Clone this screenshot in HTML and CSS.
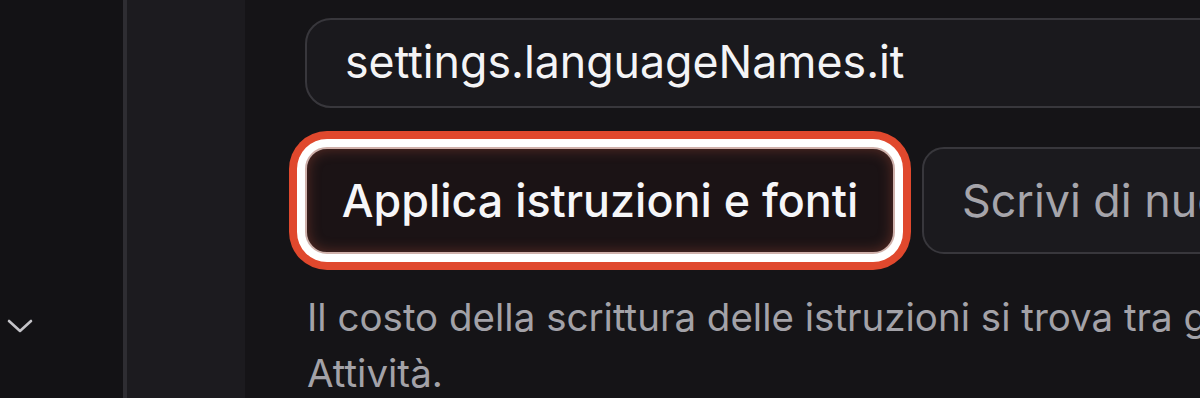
FILE: index.html
```html
<!DOCTYPE html>
<html lang="it">
<head>
<meta charset="utf-8">
<link rel="stylesheet" href="styles.css">
</head>
<body>
<div class="app">
  <aside class="rail">
    <svg class="chev" width="26" height="16" viewBox="0 0 26 16"><path d="M2 3 L13 13 L24 3" fill="none" stroke="#c4c3c8" stroke-width="2.6" stroke-linecap="round" stroke-linejoin="round"/></svg>
  </aside>
  <aside class="panel"></aside>
  <main class="main">
    <div class="field">settings.languageNames.it</div>
    <div class="actions">
      <button class="btn btn-primary">Applica istruzioni e fonti</button>
      <button class="btn btn-secondary">Scrivi di nuovo le istruzioni</button>
    </div>
    <p class="note">Il costo della scrittura delle istruzioni si trova tra gli addebiti nella pagina Attività.</p>
  </main>
</div>
</body>
</html>
```

FILE: styles.css
```css
html, body {
  margin: 0;
  padding: 0;
  background: #151417;
  overflow: hidden;
}
.app {
  display: flex;
  width: 1200px;
  height: 398px;
  overflow: hidden;
}
.rail {
  flex: 0 0 127px;
  background: #131215;
  border-right: 4px solid #2e2d32;
  display: flex;
  flex-direction: column;
  padding-top: 318px;
  padding-left: 7px;
  box-sizing: border-box;
}
.chev { display: block; }
.panel {
  flex: 0 0 118px;
  background: #1c1b1f;
}
.main {
  flex: 1 1 auto;
  padding: 18px 0 0 60px;
  min-width: 0;
  overflow: hidden;
}
.field {
  box-sizing: border-box;
  width: 1000px;
  height: 90px;
  border: 2px solid #38373c;
  border-radius: 26px;
  background: #1a191d;
  color: #f4f4f6;
  font-family: Inter, "Noto Sans", sans-serif;
  font-size: 44.7px;
  line-height: 84px;
  padding-left: 38px;
  white-space: nowrap;
}
.actions {
  display: flex;
  gap: 27px;
  margin-top: 39px;
  white-space: nowrap;
}
.btn {
  box-sizing: border-box;
  height: 107px;
  border-radius: 22px;
  font-family: Inter, "Noto Sans", sans-serif;
  font-size: 44.8px;
  font-weight: 500;
  padding: 0;
  flex: 0 0 auto;
}
.btn-primary {
  width: 590px;
  background: #1b1315;
  color: #f6f6f8;
  border: 2px solid #cfb0aa;
  box-shadow: inset 0 0 14px rgba(214, 95, 70, 0.35), 0 0 0 8px #ffffff, 0 0 0 16px #e0482d;
}
.btn-secondary {
  width: 600px;
  background: #1b1a1e;
  color: #a6a5ab;
  border: 2px solid #38373c;
  font-weight: 400;
  text-align: left;
  padding-left: 38px;
}
.note {
  margin: 35px 0 0 2px;
  color: #a3a2a8;
  font-family: Inter, "Noto Sans", sans-serif;
  font-size: 38.5px;
  line-height: 56px;
  width: 1350px;
}
```
